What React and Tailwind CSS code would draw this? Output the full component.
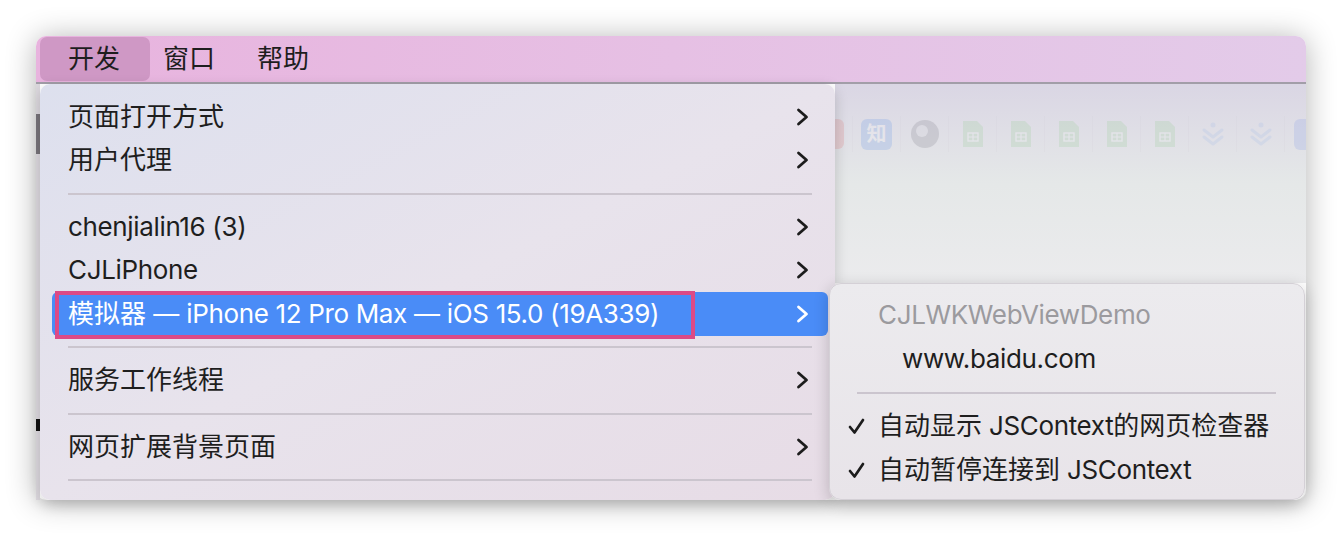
import React from 'react';

const font = "font-['Inter','Noto_Sans_CJK_SC',sans-serif]";

// latin runs are a touch wider in Inter than in the system font, so tighten them
function T({ children }) {
  const parts = String(children).split(/([\x20-\x7E]+)/);
  return (
    <span>
      {parts.map((p, i) =>
        /[A-Za-z0-9]/.test(p) ? <span key={i} className="tracking-[-0.35px]">{p}</span> : <span key={i}>{p}</span>
      )}
    </span>
  );
}

function Chevron({ white }) {
  return (
    <svg width="13" height="18" viewBox="0 0 13 18" className="shrink-0">
      <path d="M2.5 2 L10.5 9 L2.5 16" fill="none" stroke={white ? '#ffffff' : '#1c1c1c'} strokeWidth="2.8" strokeLinecap="round" strokeLinejoin="round" />
    </svg>
  );
}

function Check() {
  return (
    <svg width="17" height="17" viewBox="0 0 17 17">
      <path d="M2 9 L6.5 14.5 L15 2" fill="none" stroke="#1c1c1c" strokeWidth="2.7" strokeLinecap="round" strokeLinejoin="round" />
    </svg>
  );
}

function Row({ label, active }) {
  return (
    <div className={`relative h-[43.5px] flex items-center justify-between pl-[16px] pr-[19px] rounded-[6px] ${active ? 'bg-[#4a8cf7] text-white' : 'text-[#1e1e1e]'}`}>
      <T>{label}</T>
      <Chevron white={active} />
      {active && <div className="absolute left-[3px] top-[-1px] w-[640px] h-[48px] border-[4px] border-[#dc4a86]" />}
    </div>
  );
}

function Sep({ cls = 'px-[16px]' }) {
  return (
    <div className={`h-[23px] flex items-center ${cls}`}>
      <div className="h-[2px] w-full bg-[#cbc5ce]" />
    </div>
  );
}

function MainMenu() {
  return (
    <div className="w-[796px] h-full rounded-[10px] bg-linear-to-br from-[#dde0ee] via-[#e8e3ec] to-[#e7dce6] pl-[12px] pr-[7px] pt-[11px] shadow-[0_4px_14px_rgba(0,0,0,0.18)] z-10">
      <Row label="页面打开方式" />
      <Row label="用户代理" />
      <Sep />
      <Row label="chenjialin16 (3)" />
      <Row label="CJLiPhone" />
      <Row label="模拟器 — iPhone 12 Pro Max — iOS 15.0 (19A339)" active />
      <Sep />
      <Row label="服务工作线程" />
      <Sep />
      <Row label="网页扩展背景页面" />
      <Sep />
    </div>
  );
}

function Doc() {
  return (
    <svg width="24" height="30" viewBox="0 0 24 30">
      <path d="M2 2 H16 L22 8 V28 H2 Z" fill="#7fc77a" />
      <rect x="7" y="14" width="10" height="8" fill="none" stroke="#ffffff" strokeWidth="1.4" />
      <path d="M7 18 H17 M12 14 V22" stroke="#ffffff" strokeWidth="1.2" />
    </svg>
  );
}

function DoubleDown() {
  return (
    <svg width="26" height="26" viewBox="0 0 26 26">
      <circle cx="13" cy="4" r="2.5" fill="#8fb0e8" />
      <path d="M4 9 L13 16 L22 9 M4 16 L13 23 L22 16" fill="none" stroke="#8fb0e8" strokeWidth="3" strokeLinecap="round" strokeLinejoin="round" />
    </svg>
  );
}

function Slot({ children }) {
  return <div className="w-[48px] h-[36px] border-l border-[#cfcbd4] flex items-center justify-center">{children}</div>;
}

function WindowContent() {
  return (
    <div className="h-[199px] bg-linear-to-b from-[#dad6e4] via-[#e5e8e8] to-[#ebebed] pt-[32px]">
      <div className="flex items-center opacity-[0.16]">
        <div className="w-[17px] h-[34px] flex items-center">
          <div className="w-[9px] h-[30px] rounded-r-[6px] bg-[#e25858]" />
        </div>
        <Slot>
          <div className="w-[31px] h-[31px] rounded-[6px] bg-[#3d7fe6] text-white text-[20px] leading-none flex items-center justify-center font-bold">知</div>
        </Slot>
        <Slot>
          <div className="w-[28px] h-[28px] rounded-full bg-[#5a5a66] flex items-center justify-center">
            <div className="w-[12px] h-[12px] rounded-full bg-[#c8c8d0] -ml-[6px] -mt-[6px]" />
          </div>
        </Slot>
        <Slot><Doc /></Slot>
        <Slot><Doc /></Slot>
        <Slot><Doc /></Slot>
        <Slot><Doc /></Slot>
        <Slot><Doc /></Slot>
        <Slot><DoubleDown /></Slot>
        <Slot><DoubleDown /></Slot>
        <div className="h-[36px] border-l border-[#cfcbd4] pl-[9px] flex items-center">
          <div className="w-[12px] h-[31px] rounded-l-[6px] bg-[#6c8ae6]" />
        </div>
      </div>
    </div>
  );
}

function SubMenu() {
  return (
    <div className="flex-1 -ml-[6px] mr-[1px] rounded-[12px] bg-linear-to-b from-[#ecebee] to-[#e8e4e9] border border-[#d4d0d6] pt-[9px] shadow-[0_4px_16px_rgba(0,0,0,0.2)] z-20 text-[#1e1e1e]">
      <div className="h-[44px] flex items-center pl-[48px] text-[#9b9a9e]"><T>CJLWKWebViewDemo</T></div>
      <div className="h-[44px] flex items-center pl-[72px]"><T>www.baidu.com</T></div>
      <Sep cls="pl-[27px] pr-[28px]" />
      <div className="h-[44px] flex items-center pl-[18px]">
        <div className="w-[30px]"><Check /></div>
        <T>自动显示 JSContext的网页检查器</T>
      </div>
      <div className="h-[44px] flex items-center pl-[18px]">
        <div className="w-[30px]"><Check /></div>
        <T>自动暂停连接到 JSContext</T>
      </div>
    </div>
  );
}

export default function App() {
  return (
    <div className={`w-[1342px] h-[536px] bg-white pt-[36px] pl-[36px] ${font} text-[26px] leading-none`}>
      <div className="w-[1270px] h-[464px] rounded-[10px] shadow-[0_2px_30px_rgba(0,0,0,0.3)] flex flex-col">
        <div className="h-[46px] rounded-t-[10px] bg-linear-to-r from-[#e8b3de] via-[#e6c0e4] to-[#e3cbe9] flex items-center text-[#1e1e1e]">
          <div className="ml-[4px] w-[110px] h-[44px] rounded-[7px] bg-[#cf98c5] flex items-center pl-[28px]">开发</div>
          <div className="ml-[13px]">窗口</div>
          <div className="ml-[42px]">帮助</div>
        </div>
        <div className="h-[2px] bg-[#a29ea8]" />
        <div className="flex flex-1">
          <div className="w-[4px] flex flex-col bg-[#dcd8de]">
            <div className="h-[30px]" />
            <div className="h-[40px] bg-[#77737a]" />
            <div className="h-[265px]" />
            <div className="h-[12px] bg-[#111111]" />
          </div>
          <MainMenu />
          <div className="flex-1 flex flex-col">
            <WindowContent />
            <SubMenu />
          </div>
        </div>
      </div>
    </div>
  );
}
